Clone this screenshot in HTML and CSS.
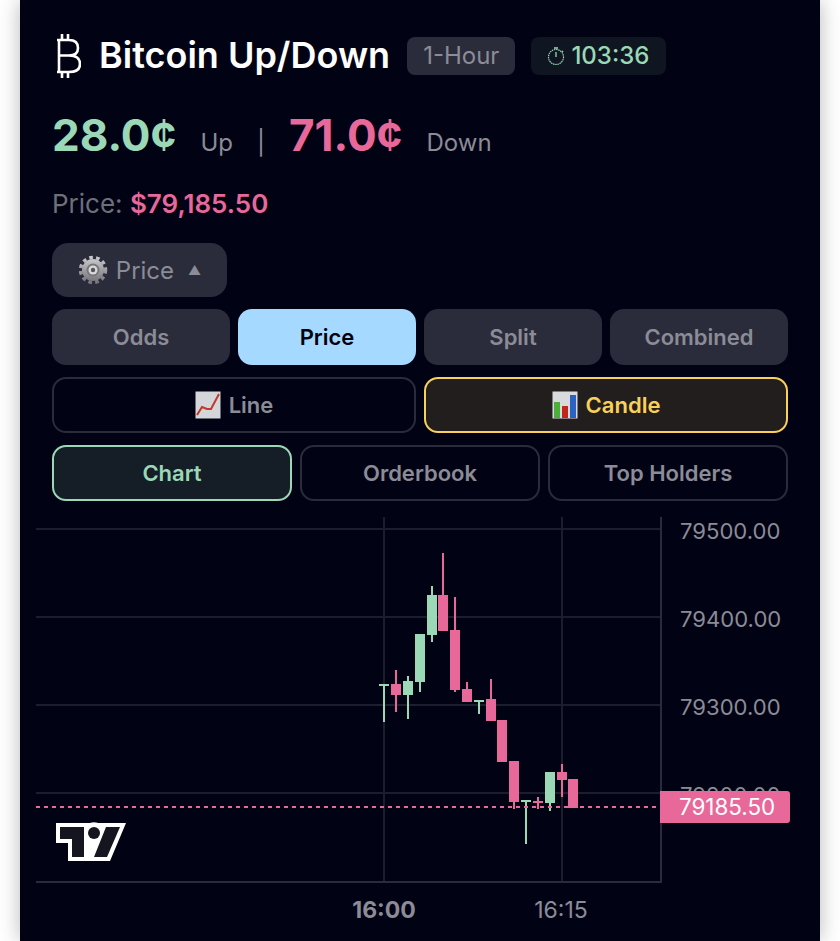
FILE: index.html
```html
<!DOCTYPE html>
<html lang="en">
<head>
<meta charset="utf-8">
<title>Bitcoin Up/Down</title>
<link rel="stylesheet" href="styles.css">
</head>
<body>
<main class="card">
  <header class="head">
    <svg class="btc" width="26" height="46" viewBox="0 0 26 46" aria-hidden="true">
      <path d="M2 7H14Q23 7 23 15Q23 22.500 14 22.500H3M14 22.500Q25 22.500 25 31Q25 39 14 39H2M4 7V39M7 1V7M13 1V7M7 39V45M13 39V45" fill="none" stroke="#fff" stroke-width="2.600"/>
    </svg>
    <h1 class="title">Bitcoin Up/Down</h1>
    <span class="badge badge-muted">1-Hour</span>
    <span class="badge badge-timer">
      <svg width="18" height="20" viewBox="0 0 18 20" aria-hidden="true">
        <circle cx="9" cy="11" r="7.500" fill="none" stroke="#9ad8b6" stroke-width="1.200" stroke-dasharray="1.500 .7"/>
        <path d="M9 11V6M7 2H11M15 5L16 6" fill="none" stroke="#9ad8b6" stroke-width="1.300"/>
      </svg>
      103:36
    </span>
  </header>

  <section class="odds">
    <span class="odd odd-up">28.0¢</span><span class="odd-label">Up</span>
    <span class="sep">|</span>
    <span class="odd odd-down">71.0¢</span><span class="odd-label">Down</span>
  </section>

  <p class="price">Price: <b>$79,185.50</b></p>

  <button class="drop">
    <svg width="30" height="30" viewBox="0 0 30 30" aria-hidden="true">
      <defs><linearGradient id="steel" x1="0" y1="0" x2="0" y2="1"><stop offset="0" stop-color="#c8c8ca"/><stop offset="1" stop-color="#77777c"/></linearGradient></defs>
      <circle cx="15" cy="15" r="11" fill="url(#steel)"/>
      <circle cx="15" cy="15" r="12.500" fill="none" stroke="url(#steel)" stroke-width="3.500" stroke-dasharray="3.600 3.250"/>
      <circle cx="15" cy="15" r="6.500" fill="#77777b"/>
      <circle cx="15" cy="15" r="4.500" fill="#d9d9da"/>
      <circle cx="15" cy="15" r="2.200" fill="#55555a"/>
    </svg>
    <span>Price</span><span class="caret">▲</span>
  </button>

  <div class="rows">
    <div class="row row-4">
      <button class="btn btn-fill">Odds</button>
      <button class="btn btn-fill btn-sky">Price</button>
      <button class="btn btn-fill">Split</button>
      <button class="btn btn-fill">Combined</button>
    </div>
    <div class="row row-2">
      <button class="btn btn-line">
        <svg width="26" height="28" viewBox="0 0 26 28" aria-hidden="true">
          <rect x="0.500" y="0.500" width="25" height="27" fill="#d4d6da"/>
          <path d="M2 24L7 16L12 18H16L24 3" fill="none" stroke="#c0392b" stroke-width="2"/>
        </svg>
        Line
      </button>
      <button class="btn btn-line btn-gold">
        <svg width="26" height="28" viewBox="0 0 26 28" aria-hidden="true">
          <rect x="0.500" y="0.500" width="25" height="27" fill="#d9dadd"/>
          <rect x="2" y="11" width="6" height="16" fill="#4caf3c"/>
          <rect x="10" y="15" width="6" height="12" fill="#c0281c"/>
          <rect x="18" y="4" width="6" height="23" fill="#2b62c4"/>
        </svg>
        Candle
      </button>
    </div>
    <div class="row row-3">
      <button class="btn btn-line btn-mint">Chart</button>
      <button class="btn btn-line">Orderbook</button>
      <button class="btn btn-line">Top Holders</button>
    </div>
  </div>

  <figure class="chart">
    <svg width="764" height="424" viewBox="36 517 764 424" role="img" aria-label="Bitcoin candlestick chart">
      <g class="grid">
        <path d="M384 517V882M562 517V882M36 529H661M36 617H661M36 705H661M36 793H661"/>
      </g>
      <path class="axis" d="M661 517V882H36"/>
      <g class="ticks">
        <text x="680" y="539">79500.00</text>
        <text x="680" y="627">79400.00</text>
        <text x="680" y="715">79300.00</text>
        <text x="680" y="803">79200.00</text>
      </g>
      <g class="up">
        <path d="M383 685H385V722H383ZM379 684H389V686H379Z"/>
        <path d="M407 676H409V719H407ZM403 681H413V695H403Z"/>
        <path d="M419 634H421V692H419ZM415 634H425V682H415Z"/>
        <path d="M431 586H433V642H431ZM427 595H437V635H427Z"/>
        <path d="M478 700H480V714H478ZM474 700H484V702H474Z"/>
        <path d="M525 800H527V844H525ZM521 800H531V802H521Z"/>
        <path d="M549 772H551V811H549ZM545 772H555V803H545Z"/>
      </g>
      <g class="down">
        <path d="M395 670H397V712H395ZM391 684H401V695H391Z"/>
        <path d="M442 553H444V631H442ZM438 595H448V631H438Z"/>
        <path d="M454 597H456V692H454ZM450 630H460V690H450Z"/>
        <path d="M466 682H468V702H466ZM462 689H472V702H462Z"/>
        <path d="M490 679H492V721H490ZM486 699H496V721H486Z"/>
        <path d="M497 720H507V762H497Z"/>
        <path d="M513 802H515V809H513ZM509 761H519V802H509Z"/>
        <path d="M537 797H539V809H537ZM533 801H543V803H533Z"/>
        <path d="M561 764H563V797H561ZM557 772H567V780H557Z"/>
        <path d="M568 779H578V808H568Z"/>
      </g>
      <path class="last" d="M36 807H660"/>
      <g class="logo">
        <path class="logo-out" d="M56 823H126L110 861H68V843H56Z"/>
        <path class="logo-in" d="M60 827H84V857H72V839H60Z"/>
        <path class="logo-in" d="M106 827H120L107 857H94Z"/>
        <circle class="logo-in" cx="94" cy="833" r="6"/>
        <path class="logo-ring" d="M86 830A8.500 8.500 0 0 1 102 830"/>
      </g>
      <path class="tag" d="M660 791H787A3 3 0 0 1 790 794V820A3 3 0 0 1 787 823H660Z"/>
      <text class="tag-text" x="679" y="815">79185.50</text>
      <text class="time time-major" x="384" y="918" text-anchor="middle">16:00</text>
      <text class="time" x="561" y="918" text-anchor="middle">16:15</text>
    </svg>
  </figure>
</main>
</body>
</html>
```
FILE: styles.css
```css
* { box-sizing: border-box; }
html, body { height: 100%; }
body {
  margin: 0;
  background: #fff;
  overflow: hidden;
  font-family: Inter, "Liberation Sans", sans-serif;
}
.card {
  width: 800px;
  height: 941px;
  margin: 0 20px;
  padding: 37px 32px 0;
  background: #020215;
  box-shadow: 0 0 20px rgba(0, 0, 0, .28);
  overflow: hidden;
}
.head {
  display: flex;
  align-items: center;
  height: 38px;
}
.btc { flex: none; margin-left: 3px; }
.title {
  margin: 0 17px 2px 18px;
  color: #fff;
  font-size: 36px;
  font-weight: 600;
  white-space: nowrap;
}
.badge {
  display: flex;
  align-items: center;
  height: 38px;
  border-radius: 8px;
  font-size: 24px;
  line-height: 1;
  white-space: nowrap;
}
.badge-muted {
  padding: 0 16px;
  background: #2a2b3b;
  color: #8b8c96;
}
.badge-timer {
  gap: 6px;
  margin-left: 16px;
  padding: 0 17px 0 16px;
  background: #0f1621;
  color: #9ad8b6;
  font-weight: 500;
}
.odds {
  display: flex;
  align-items: baseline;
  height: 60px;
  margin-top: 38px;
  line-height: 44px;
}
.odd {
  font-size: 44px;
  font-weight: 700;
}
.odd-up { color: #9ad8b6; }
.odd-down { color: #e8689a; }
.odd-label {
  margin-left: 24px;
  color: #8b8c96;
  font-size: 24px;
}
.sep {
  margin: 0 24px;
  color: #8b8c96;
  font-size: 24px;
}
.price {
  height: 32px;
  margin: 15px 0 0;
  color: #6e6f78;
  font-size: 26px;
  line-height: 32px;
}
.price b { color: #e8689a; font-weight: 600; }
button { font-family: inherit; cursor: pointer; }
.drop {
  display: flex;
  align-items: center;
  justify-content: center;
  gap: 8px;
  width: 175px;
  height: 54px;
  margin-top: 23px;
  padding: 0;
  border: 0;
  border-radius: 16px;
  background: #2a2b3b;
  color: #8b8c96;
  font-size: 24px;
}
.caret { margin-left: 6px; font-size: 13px; }
.rows {
  display: flex;
  flex-direction: column;
  gap: 12px;
  margin-top: 12px;
}
.row {
  display: grid;
  gap: 8px;
  height: 56px;
}
.row-4 { grid-template-columns: repeat(4, 1fr); }
.row-2 { grid-template-columns: repeat(2, 1fr); }
.row-3 { grid-template-columns: repeat(3, 1fr); }
.btn {
  display: flex;
  align-items: center;
  justify-content: center;
  gap: 8px;
  padding: 0;
  border-radius: 14px;
  color: #8b8c96;
  font-size: 22px;
  font-weight: 600;
}
.btn-fill { border: 0; background: #2a2b3b; }
.btn-sky { background: #a6d9ff; color: #02020f; }
.btn-line { border: 2px solid #2a2b3b; background: transparent; }
.btn-gold { border-color: #f9d05a; background: #221e1e; color: #f9d05a; }
.btn-mint { border-color: #9ad8b6; background: #151d27; color: #9ad8b6; }
.chart {
  margin: 16px 0 0 -16px;
  width: 764px;
  height: 424px;
}
.chart svg { display: block; }
.grid path { fill: none; stroke: #1c1d2d; stroke-width: 2; }
.axis { fill: none; stroke: #2a2b3b; stroke-width: 2; }
.ticks text { fill: #8b8c96; font-size: 22.100px; }
.time { fill: #8b8c96; font-size: 23px; }
.time-major { font-weight: 700; }
.up path { fill: #9ad8b6; }
.down path { fill: #e8689a; }
.last { fill: none; stroke: #e8689a; stroke-width: 2; stroke-dasharray: 4 4; }
.logo-out { fill: #fff; }
.logo-in { fill: #14151f; }
.logo-ring { fill: none; stroke: #fff; stroke-width: 4; }
.tag { fill: #e8689a; }
.tag-text { fill: #fff; font-size: 22.400px; }
```
